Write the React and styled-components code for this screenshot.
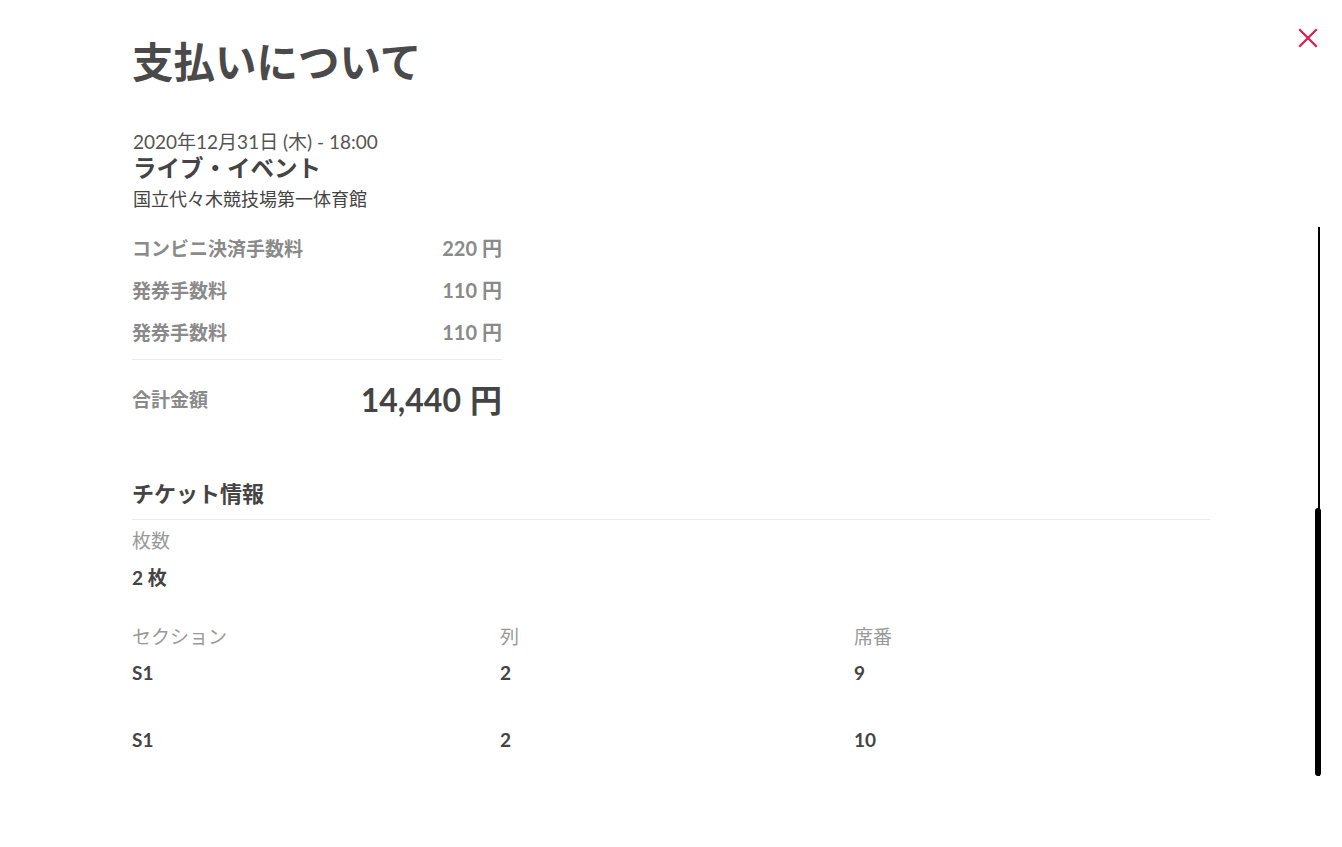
import React from 'react'
import styled, { createGlobalStyle } from 'styled-components'

const GlobalStyle = createGlobalStyle`
  html, body {
    margin: 0;
    padding: 0;
    background: #fff;
  }
  body {
    font-family: Lato, "Noto Sans CJK JP", sans-serif;
    color: #444;
  }
`

const fees = [
    { label: 'コンビニ決済手数料', amount: '220' },
    { label: '発券手数料', amount: '110' },
    { label: '発券手数料', amount: '110' },
]

const seats = [
    { section: 'S1', row: '2', seat: '9' },
    { section: 'S1', row: '2', seat: '10' },
]

function App() {
    return (
        <Modal>
            <GlobalStyle />
            <CloseButton aria-label="close">
                <svg width="20" height="20" viewBox="0 0 20 20">
                    <path d="M2 2L18 18M18 2L2 18" stroke="#d81e4a" strokeWidth="2.2" strokeLinecap="square" />
                </svg>
            </CloseButton>
            <Content>
                <Title>支払いについて</Title>
                <EventInfo>
                    <EventDate>2020年12月31日 (木) - 18:00</EventDate>
                    <EventName>ライブ・イベント</EventName>
                    <Venue>国立代々木競技場第一体育館</Venue>
                </EventInfo>
                <Fees>
                    {fees.map((fee, i) => (
                        <FeeRow key={i}>
                            <FeeLabel>{fee.label}</FeeLabel>
                            <FeeAmount>{fee.amount}<Yen>円</Yen></FeeAmount>
                        </FeeRow>
                    ))}
                    <TotalRow>
                        <FeeLabel>合計金額</FeeLabel>
                        <TotalAmount>14,440<Yen $gap="9px">円</Yen></TotalAmount>
                    </TotalRow>
                </Fees>
                <Section>
                    <SectionTitle>チケット情報</SectionTitle>
                    <Label>枚数</Label>
                    <Value>2 枚</Value>
                    <SeatGrid>
                        <Label>セクション</Label>
                        <Label>列</Label>
                        <Label>席番</Label>
                        {seats.map((s, i) => (
                            <React.Fragment key={i}>
                                <SeatValue $first={i === 0}>{s.section}</SeatValue>
                                <SeatValue $first={i === 0}>{s.row}</SeatValue>
                                <SeatValue $first={i === 0}>{s.seat}</SeatValue>
                            </React.Fragment>
                        ))}
                    </SeatGrid>
                </Section>
            </Content>
            <ScrollTrack>
                <ScrollThumb />
            </ScrollTrack>
        </Modal>
    )
}

const Modal = styled.div`
position: relative;
width: 1342px;
height: 847px;
overflow: hidden;
background: #fff;
`
const CloseButton = styled.button`
position: absolute;
top: 28px;
right: 24px;
padding: 0;
border: none;
background: none;
line-height: 0;
cursor: pointer;
`
const Content = styled.div`
width: 1078px;
padding: 38px 0 0 132px;
`
const Title = styled.h1`
margin: 0;
font-size: 41.5px;
line-height: 48px;
font-weight: 700;
color: #4a4a4a;
`
const EventInfo = styled.div`
margin-top: 44px;
`
const EventDate = styled.div`
padding-left: 1px;
font-size: 19px;
line-height: 24px;
color: #555;
`
const EventName = styled.div`
padding-left: 1px;
font-size: 23.5px;
line-height: 28px;
font-weight: 700;
color: #444;
`
const Venue = styled.div`
margin-top: 4px;
padding-left: 1px;
font-size: 18px;
line-height: 26px;
color: #444;
`
const Fees = styled.div`
width: 370px;
margin-top: 14px;
`
const FeeRow = styled.div`
display: flex;
justify-content: space-between;
align-items: center;
height: 42px;
`
const FeeLabel = styled.span`
font-size: 19px;
font-weight: 700;
color: #8a8a8a;
`
const FeeAmount = styled.span`
font-size: 20px;
font-weight: 700;
color: #8a8a8a;
`
const Yen = styled.span`
margin-left: ${p => p.$gap || '5px'};
`
const TotalRow = styled.div`
display: flex;
justify-content: space-between;
align-items: center;
margin-top: 7px;
padding-top: 16px;
height: 44px;
border-top: 1px solid #ececec;
`
const TotalAmount = styled.span`
font-size: 32px;
font-weight: 700;
color: #444;
`
const Section = styled.div`
margin-top: 59px;
`
const SectionTitle = styled.h2`
margin: 0 0 8px;
padding-bottom: 10px;
font-size: 22px;
line-height: 30px;
font-weight: 700;
color: #444;
border-bottom: 1px solid #ececec;
`
const Label = styled.div`
font-size: 19px;
line-height: 26px;
color: #999;
`
const Value = styled.div`
margin-top: 11px;
font-size: 19px;
line-height: 26px;
font-weight: 700;
color: #444;
`
const SeatGrid = styled.div`
display: grid;
grid-template-columns: 368px 354px 1fr;
margin-top: 33px;
`
const SeatValue = styled.div`
margin-top: ${p => (p.$first ? '10px' : '41px')};
font-size: 19px;
line-height: 26px;
font-weight: 700;
color: #444;
`
const ScrollTrack = styled.div`
position: absolute;
top: 227px;
left: 1318px;
width: 2px;
height: 549px;
background: #000;
`
const ScrollThumb = styled.div`
position: absolute;
bottom: 0;
left: -3px;
width: 6px;
height: 268px;
border-radius: 3px;
background: #000;
`

export default App
